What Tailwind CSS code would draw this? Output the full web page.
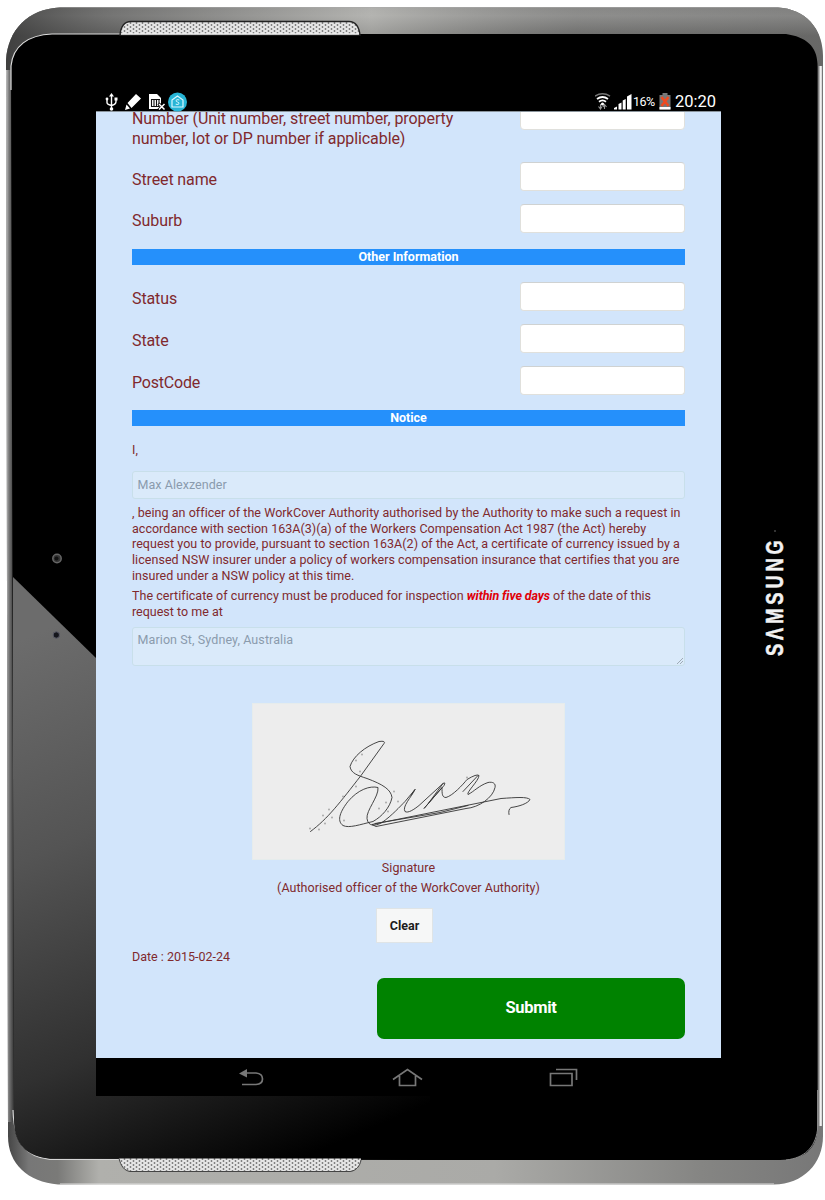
<!DOCTYPE html>
<html lang="en">
<head>
<meta charset="utf-8">
<title>Request form</title>
<script src="https://cdn.jsdelivr.net/npm/@tailwindcss/browser@4"></script>
</head>
<body class="bg-white">
<div class="relative w-[825px] h-[1200px] overflow-hidden font-['Roboto',sans-serif] text-[#80292d]">
  <!-- tablet body -->
  <svg class="absolute inset-0" width="825" height="1200" viewBox="0 0 825 1200">
    <defs>
      <linearGradient id="top" x1="0" y1="0" x2="0" y2="1"><stop offset="0" stop-color="#8f8f8d"/><stop offset=".3" stop-color="#989896"/><stop offset="1" stop-color="#686866"/></linearGradient>
      <linearGradient id="topx" x1="0" y1="0" x2="1" y2="0"><stop offset="0" stop-color="#333" stop-opacity=".8"/><stop offset=".14" stop-color="#555" stop-opacity=".5"/><stop offset=".45" stop-color="#d0d0cc" stop-opacity=".5"/><stop offset=".7" stop-color="#777" stop-opacity=".3"/><stop offset="1" stop-color="#666" stop-opacity=".4"/></linearGradient>
      <linearGradient id="botx" x1="0" y1="0" x2="1" y2="0"><stop offset="0" stop-color="#333"/><stop offset=".035" stop-color="#777"/><stop offset=".07" stop-color="#7a7a78"/><stop offset=".12" stop-color="#b0b0ac"/><stop offset=".6" stop-color="#aaaaa7"/><stop offset=".85" stop-color="#858583"/><stop offset="1" stop-color="#777"/></linearGradient>
      <linearGradient id="side" x1="0" y1="0" x2="1" y2="0"><stop offset="0" stop-color="#ddd"/><stop offset=".45" stop-color="#777"/><stop offset="1" stop-color="#333"/></linearGradient>
      <linearGradient id="rside" x1="0" y1="0" x2="1" y2="0"><stop offset="0" stop-color="#222"/><stop offset=".45" stop-color="#666"/><stop offset=".75" stop-color="#fff"/><stop offset=".9" stop-color="#bbb"/><stop offset="1" stop-color="#222"/></linearGradient>
      <linearGradient id="glare" gradientUnits="userSpaceOnUse" x1="20" y1="640" x2="250" y2="1180"><stop offset="0" stop-color="#6c6c6c"/><stop offset=".35" stop-color="#545454"/><stop offset=".7" stop-color="#303030"/><stop offset="1" stop-color="#000"/></linearGradient>
      <pattern id="mesh" width="6" height="4" patternUnits="userSpaceOnUse"><rect width="6" height="4" fill="#e6e6e6"/><circle cx="1.500" cy="1" r=".9" fill="#777"/><circle cx="4.500" cy="3" r=".9" fill="#777"/></pattern>
      <clipPath id="body"><path d="M60 7.500H778C805 9 823 28 823 56V1136C823 1164 803 1184 774 1184.500H58C28 1182 8 1164 8 1136L6 60C8 30 28 9 60 7.500Z"/></clipPath>
      <clipPath id="glass"><path d="M52 34H786C806 37 817 46 817.500 64V1130C816 1149 804 1160 780 1160H430L50 1158.500C26 1157 14 1143 14 1120L11 66C13 46 28 35 52 34Z"/></clipPath>
    </defs>
    <g clip-path="url(#body)">
      <rect width="825" height="600" fill="#686866"/>
      <rect y="7" width="825" height="29" fill="url(#top)"/>
      <rect y="7" width="825" height="90" fill="url(#topx)"/>
      <rect y="600" width="825" height="600" fill="url(#botx)"/>
      <rect x="5" y="70" width="9" height="1052" fill="url(#side)"/>
      <rect x="814" y="66" width="9" height="1060" fill="url(#rside)"/>
      <path d="M60 1184H774" stroke="#ddd" stroke-width="1.200"/>
    </g>
    <path d="M52 34H786C806 37 817 46 817.500 64V1130C816 1149 804 1160 780 1160H430L50 1158.500C26 1157 14 1143 14 1120L11 66C13 46 28 35 52 34Z" fill="#000"/>
    <path d="M11 90V66C13 46 28 35 52 34H120" fill="none" stroke="#ddd" stroke-width="1.200"/>
    <path d="M13 1110C14 1143 26 1157 50 1159.500H120" fill="none" stroke="#d5d5d5" stroke-width="1.200"/>
    <path d="M817.500 1090V1130C815 1148 804 1158 786 1160" fill="none" stroke="#888"/>
    <g clip-path="url(#glass)"><path d="M13 577L430 984V1160H13Z" fill="url(#glare)"/></g>
    <path d="M120 35C121 25 125 21.500 131 21.500H349C356 21.500 359 27 360 35Z" fill="url(#mesh)" stroke="#222" stroke-width="1.300"/>
    <path d="M121 34H359" stroke="#eee" stroke-width="1.500"/>
    <path d="M119 1158.500H361C360 1167 357 1171 350 1171H130C124 1170 121 1166 119 1158.500Z" fill="url(#mesh)"/>
    <path d="M119 1158.500C121 1166 124 1170.500 130 1171.500H350C356 1171 360 1166 361 1160" fill="none" stroke="#444"/>
    <circle cx="57" cy="558.500" r="4.200" fill="#333" stroke="#666" stroke-width="1.500"/><circle cx="56.500" cy="558.500" r="2" fill="#111"/>
    <circle cx="56.300" cy="635" r="3.200" fill="#15161c" stroke="#5a5b68"/>
    <circle cx="775" cy="531" r="1" fill="#444"/>
    <text transform="translate(782.500 656) rotate(-90) scale(.78 1)" font-family="Liberation Sans, sans-serif" font-weight="700" font-size="23.500" textLength="148.500" lengthAdjust="spacing" fill="#f2f2f2" stroke="#f2f2f2" stroke-width=".5">SΛMSUNG</text>
  </svg>

  <main class="relative ml-24 pt-[91px] w-[625px]">
    <!-- status bar -->
    <header class="h-[20px] bg-black flex justify-between items-start text-white">
      <svg width="100" height="21" viewBox="0 0 100 21" fill="none" stroke="#fff">
        <path d="M15.500 4V19M11 8V11.500Q11 13.500 15.500 14.500Q20 13.500 20 10.500V8" stroke-width="1.400"/><path d="M15.500 2L18 5.500H13Z" fill="#fff" stroke="none"/><circle cx="15.500" cy="18" r="1.800" fill="#fff" stroke="none"/><circle cx="11" cy="8" r="1.400" fill="#fff" stroke="none"/><path d="M18.500 6.500h3v3h-3z" fill="#fff" stroke="none"/>
        <path d="M40 3L45 7.500L35.500 17L31.500 12ZM30.500 13.500L34 17.500L29 19Z" fill="#fff" stroke="none"/>
        <path d="M53 3H61L65 7V18H53Z" fill="#fff" stroke="none"/><path d="M55.500 8.500H63V15.500H55.500ZM55 8.500H64M58 8.500V15M60.500 8.500V15" stroke="#111" stroke-width="1.100"/><path d="M62.500 12.500L69 19M69 12.500L62.500 19" stroke="#000" stroke-width="3"/><path d="M63 13L68.500 18.500M68.500 13L63 18.500" stroke-width="1.500"/>
        <circle cx="81.500" cy="11" r="9.500" fill="#27b5d6" stroke="none"/><path d="M76 9L81.500 5L87 9V16H76Z" stroke="#d9f7ff" stroke-width="1.200"/><path d="M83.300 9Q80.500 8 80 9.500Q80 10.700 81.500 11Q83.300 11.500 83 12.700Q82.500 14 79.700 13.200" stroke="#d9f7ff" stroke-width="1"/>
      </svg>
      <div class="flex items-start pr-[5px]">
        <svg width="37" height="21" viewBox="0 0 37 21" fill="none">
          <path d="M0 5.200Q7.500 .5 15 5.200" stroke="#777" stroke-width="1.500"/><path d="M2 8Q7.500 4 13 8M4 10.800Q7.500 8 11 10.800" stroke="#fff" stroke-width="1.800"/><circle cx="7.500" cy="13" r="1.600" fill="#fff"/><path d="M5.500 13V17M3.500 15.500L5.500 18L7 15.500M9.500 18V14M8 16L9.500 13.500L11.500 16" stroke="#999" stroke-width="1.100"/>
          <path d="M19 18.500V17L22 15.500V18.500ZM23.500 18.500V13L26.500 11.500V18.500ZM27.700 18.500V9.500L30.700 8V18.500ZM32 18.500V5.500L36.500 3V18.500Z" fill="#fff"/>
        </svg>
        <span class="text-[12.5px] leading-[21px] ml-[1px] w-[26px] whitespace-nowrap tracking-[-0.5px]">16%</span>
        <svg width="12" height="21" viewBox="0 0 12 21"><path d="M3.500 2H8.500V4H11.500V18.500H.5V4H3.500Z" fill="#777"/><path d="M.5 16H11.500V18.500H.5Z" fill="#fff"/><path d="M2.500 6L9.500 15M9.500 6L2.500 15" stroke="#f04a20" stroke-width="2.600"/></svg>
        <span class="text-[16.5px] leading-[21px] ml-[4px] w-[41px] whitespace-nowrap">20:20</span>
      </div>
    </header>

    <!-- form -->
    <section class="h-[947px] bg-[#d2e5fb] px-9 overflow-hidden border-t border-[#8a949c]">
      <div class="h-[44px] flex justify-between text-[16px] leading-[20.500px]">
        <p class="-mt-[3.500px] whitespace-nowrap tracking-[-0.08px]">Number (Unit number, street number, property<br>number, lot or DP number if applicable)</p>
        <div class="w-[165px] h-[29px] -mt-[11px] bg-white rounded-[4px] border border-[#e0e0dc]"></div>
      </div>
      <div class="h-[42px] flex justify-between text-[16px]"><label class="leading-[47px] tracking-[-0.12px]">Street name</label><div class="w-[165px] h-[29px] mt-[6px] bg-white rounded-[4px] border border-[#e0e0dc] border-t-[#cfd2d2]"></div></div>
      <div class="h-[42px] flex justify-between text-[16px]"><label class="leading-[46px] tracking-[-0.05px]">Suburb</label><div class="w-[165px] h-[29px] mt-[6px] bg-white rounded-[4px] border border-[#e0e0dc] border-t-[#cfd2d2]"></div></div>
      <h2 class="mt-[9px] h-4 bg-[#2590fb] text-white text-[12.5px] leading-[15px] font-bold text-center">Other Information</h2>
      <div class="mt-[11px] h-[42px] flex justify-between text-[16px]"><label class="leading-[46px] tracking-[-0.12px]">Status</label><div class="w-[165px] h-[29px] mt-[6px] bg-white rounded-[4px] border border-[#e0e0dc] border-t-[#cfd2d2]"></div></div>
      <div class="h-[42px] flex justify-between text-[16px]"><label class="leading-[46px] tracking-[-0.12px]">State</label><div class="w-[165px] h-[29px] mt-[6px] bg-white rounded-[4px] border border-[#e0e0dc] border-t-[#cfd2d2]"></div></div>
      <div class="h-[42px] flex justify-between text-[16px]"><label class="leading-[46px] tracking-[-0.2px]">PostCode</label><div class="w-[165px] h-[29px] mt-[6px] bg-white rounded-[4px] border border-[#e0e0dc] border-t-[#cfd2d2]"></div></div>
      <h2 class="mt-[8px] h-4 bg-[#2590fb] text-white text-[12.5px] leading-4 font-bold text-center">Notice</h2>

      <div class="text-[12.5px] leading-[15.750px]">
        <p class="mt-4">I,</p>
        <div class="mt-[13px] h-[28px] rounded-[3px] border border-[#c8dfea] bg-[#daeafa] pl-[4.500px] text-[#8a9bad] leading-[25px] tracking-[0.05px]">Max Alexzender</div>
        <p class="mt-[6px] whitespace-nowrap"><span class="tracking-[0.056px]">, being an officer of the WorkCover Authority authorised by the Authority to make such a request in</span><br><span class="tracking-[0.025px]">accordance with section 163A(3)(a) of the Workers Compensation Act 1987 (the Act) hereby</span><br><span class="tracking-[0.04px]">request you to provide, pursuant to section 163A(2) of the Act, a certificate of currency issued by a</span><br><span class="tracking-[0.05px]">licensed NSW insurer under a policy of workers compensation insurance that certifies that you are</span><br><span class="tracking-[0.04px]">insured under a NSW policy at this time.</span></p>
        <p class="mt-[4.300px] whitespace-nowrap"><span class="tracking-[0.04px]">The certificate of currency must be produced for inspection</span> <b class="italic text-[#e00008] tracking-[-0.1px]">within five days</b> of the date of this<br>request to me at</p>
        <div class="mt-[7.700px] h-[39px] rounded-[3px] border border-[#c8dfea] bg-[#daeafa] pl-[4.500px] text-[#8a9bad] leading-[24px] tracking-[0.1px] flex justify-between items-end"><span class="self-start">Marion St, Sydney, Australia</span><svg width="9" height="9" viewBox="0 0 9 9" stroke="#98a4ae" stroke-width=".9"><path d="M2 8L8 2M5 8L8 5"/></svg></div>
      </div>

      <div class="mt-[37px] mx-auto w-[313px] h-[157px] bg-[#ededed] border border-[#e6ecec]">
        <svg class="-m-px" width="313" height="157" viewBox="2 3.500 313 157" fill="none" stroke="#333" stroke-width=".9" stroke-linecap="round" stroke-linejoin="round">
          <path d="M60.500 132C78 119 90 103 111 76L134 44Q136 41 129 42C115 47 103 57 100 67C101 74 108 76 117 79C133 85 141 90 142 98C140 108 132 117 123 122C110 125 99 129 93 126C86 121 91 111 98 102C108 90 120 86 128 88C129 97 116 111 117 119C118 127 125 127 132 123C142 116 150 107 155 102L165 90C161 98 152 107 155 112C158 114 164 110 169 106L193 84Q196 82 194 86L174 109L192 88C192 94 192 98 196 98C203 96 213 85 217 80Q227 74 229 76C229 81 216 93 218 95C224 92 229 86 238 83C243 82 246 84 245 88C243 98 229 108 216 109L126 127L122 125L251 99C266 98 277 97 280 100C278 104 269 107 261 108Q258 110 259 115"/>
          <path d="M125 124L190 113L218 106M193 84L179 103M228 76L213 92M165 90L161 96" />
          <g fill="#aaa" stroke="none"><circle cx="106" cy="61" r="1"/><circle cx="112" cy="55" r="1"/><circle cx="110" cy="72" r="1"/><circle cx="106" cy="87" r="1"/><circle cx="93" cy="97" r="1"/><circle cx="79" cy="110" r="1"/><circle cx="73" cy="116" r="1"/><circle cx="82" cy="118" r="1"/><circle cx="94" cy="121" r="1"/><circle cx="75" cy="124" r="1"/><circle cx="60" cy="129" r="1"/><circle cx="69" cy="130" r="1"/><circle cx="129" cy="109" r="1"/><circle cx="138" cy="112" r="1"/><circle cx="136" cy="103" r="1"/><circle cx="148" cy="102" r="1"/><circle cx="144" cy="92" r="1"/><circle cx="217" cy="78" r="1"/></g>
        </svg>
      </div>
      <div class="text-[12.5px] leading-5 text-center tracking-[0.04px]"><p class="-mt-[2px]">Signature</p><p>(Authorised officer of the WorkCover Authority)</p></div>
      <div class="mt-[10px] ml-[244px] w-[57px] h-[35px] bg-[#f6f7f7] border border-[#dfe4e6] text-[#1c1c1c] text-[12.5px] leading-[33px] font-bold text-center">Clear</div>
      <p class="mt-[4px] text-[12.5px] leading-5">Date : 2015-02-24</p>
      <div class="mt-[11px] ml-auto w-[308px] h-[61px] rounded-[7px] bg-[#008200] text-white text-[16.500px] leading-[60px] font-bold text-center tracking-[-0.3px]">Submit</div>
    </section>

    <!-- navigation bar -->
    <nav class="h-[38px] bg-black">
      <svg width="625" height="38" viewBox="0 0 625 38" fill="none" stroke="#777" stroke-width="1.700">
        <path d="M148 15H160Q166.500 15.500 166.500 21Q166.500 26 160 26.500H146"/><path d="M143 15.500L151 11V19.500Z" fill="#777" stroke="none"/>
        <path d="M297 21.500L311.500 11.500L326 21.500M303.500 18V27.500H319.500V18"/>
        <path d="M454.500 15.500H476V27.500H454.500ZM460 11.500H480.500V22"/>
      </svg>
    </nav>
  </main>
</div>
</body>
</html>
